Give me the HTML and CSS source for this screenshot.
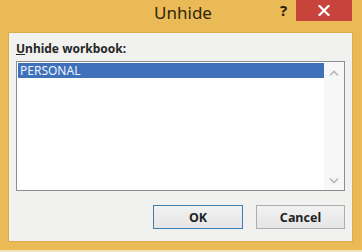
FILE: index.html
```html
<!DOCTYPE html>
<html>
<head>
<meta charset="utf-8">
<link rel="stylesheet" href="styles.css">
</head>
<body>
<div class="window">
  <div class="titlebar">
    <div class="title">Unhide</div>
    <div class="help">?</div>
    <div class="close">
      <svg width="12" height="11" viewBox="0 0 12 11"><path d="M1.5 1 L10.5 10 M10.5 1 L1.5 10" stroke="#fff" stroke-width="2.2" stroke-linecap="square"/></svg>
    </div>
  </div>
  <div class="client">
    <div class="label"><u>U</u>nhide workbook:</div>
    <div class="listbox">
      <div class="items">
        <div class="item selected">PERSONAL</div>
      </div>
      <div class="scrollbar">
        <svg width="10" height="7" viewBox="0 0 10 7"><path d="M1 5.5 L5 1.5 L9 5.5" fill="none" stroke="#b8b8b8" stroke-width="1.6"/></svg>
        <svg width="10" height="7" viewBox="0 0 10 7"><path d="M1 1.5 L5 5.5 L9 1.5" fill="none" stroke="#b8b8b8" stroke-width="1.6"/></svg>
      </div>
    </div>
    <div class="buttons">
      <div class="btn default">OK</div>
      <div class="btn">Cancel</div>
    </div>
  </div>
</div>
</body>
</html>
```
FILE: styles.css
```css
html, body {
  margin: 0;
  padding: 0;
}
body {
  width: 362px;
  height: 252px;
  overflow: hidden;
  background: #e9ba55;
  font-family: "Noto Sans", "Open Sans", sans-serif;
}
.window {
  width: 362px;
  height: 252px;
  display: flex;
  flex-direction: column;
  background: #e9ba55;
  box-sizing: border-box;
  border-bottom: 2px solid #f3e3bd;
}
.titlebar {
  height: 32px;
  position: relative;
  display: flex;
  justify-content: center;
}
.title {
  font-size: 17px;
  color: #33260c;
  line-height: 17px;
  margin-top: 4px;
  margin-left: 4px;
}
.help {
  position: absolute;
  left: 280px;
  top: 0px;
  font-size: 15px;
  font-weight: bold;
  color: #2a2010;
}
.close {
  position: absolute;
  left: 296px;
  top: 0;
  width: 56px;
  height: 21px;
  background: #c8433b;
  display: flex;
  align-items: center;
  justify-content: center;
}
.client {
  margin: 0 9px 8px 8px;
  flex: 1;
  background: #f1f1f0;
  border: 1px solid #d9ab4c;
  box-sizing: border-box;
  padding: 0 7px 11px 7px;
  display: flex;
  flex-direction: column;
}
.label {
  font-size: 12px;
  font-weight: bold;
  color: #262626;
  height: 28px;
  line-height: 14px;
  padding-top: 9px;
  box-sizing: border-box;
}
.listbox {
  height: 130px;
  border: 1px solid #8a8d92;
  background: #ffffff;
  display: flex;
  box-sizing: border-box;
}
.items {
  flex: 1;
  padding: 1px 0 0 1px;
}
.item {
  height: 15px;
  line-height: 15px;
  font-size: 12px;
  padding-left: 2px;
  color: #222;
}
.item.selected {
  background: #3f70ba;
  color: #eef4ff;
}
.scrollbar {
  width: 20px;
  background: #f7f7f7;
  display: flex;
  flex-direction: column;
  justify-content: space-between;
  align-items: center;
  padding: 8px 0 6px 0;
}
.buttons {
  margin-top: 14px;
  display: flex;
  justify-content: flex-end;
  gap: 13px;
}
.btn {
  width: 89px;
  height: 24px;
  box-sizing: border-box;
  border: 1px solid #adadad;
  background: linear-gradient(#f2f2f2, #e5e5e5);
  font-size: 12.5px;
  font-weight: bold;
  color: #222;
  display: flex;
  align-items: center;
  justify-content: center;
}
.btn.default {
  width: 90px;
  border-color: #3c7fb1;
}
```
